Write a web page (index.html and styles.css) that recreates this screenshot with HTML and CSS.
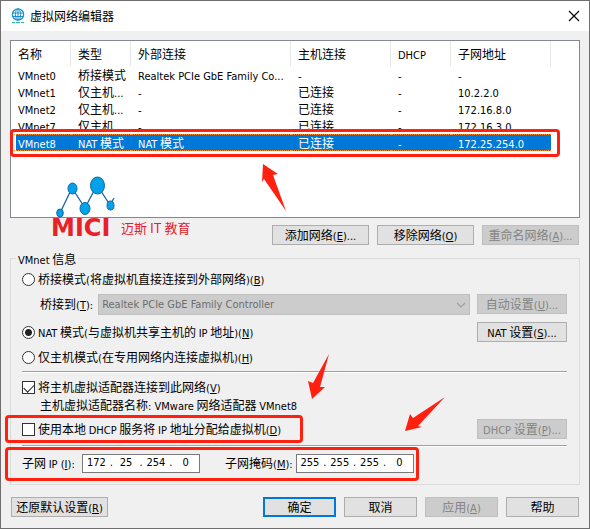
FILE: index.html
```html
<!DOCTYPE html>
<html lang="zh-CN">

<head>
    <meta charset="UTF-8">
    <meta name="viewport" content="width=device-width, initial-scale=1.0">
    <title>虚拟网络编辑器</title>
    <link rel="stylesheet" href="styles.css">
</head>

<body>
    <main class="window">
        <header class="titlebar">
            <svg class="globe" width="14" height="16" viewBox="0 0 14 16" fill="none" stroke="#1a8fc9">
                <circle cx="7" cy="6.5" r="5.6" stroke-width="1.3" />
                <ellipse cx="7" cy="6.5" rx="2.6" ry="5.6" />
                <path d="M7 1v11M1.5 5h11M1.5 8.500h11" />
                <path d="M1 14.5h3M5 14.5h4M10 14.5h3" stroke="#2bb5a0" />
            </svg>
            <h1>虚拟网络编辑器</h1>
            <button type="button" class="close" aria-label="关闭">
                <svg width="12" height="12" viewBox="0 0 12 12" stroke="#000" stroke-width="1.1">
                    <path d="M1 1l10 10M11 1L1 11" />
                </svg>
            </button>
        </header>

        <form class="content">
            <!-- lista de redes -->
            <div class="list">
                <table>
                    <colgroup>
                        <col class="c-name">
                        <col class="c-short">
                        <col class="c-wide">
                        <col class="c-medium">
                        <col class="c-short">
                        <col class="c-medium">
                        <col>
                    </colgroup>
                    <thead>
                        <tr>
                            <th>名称</th>
                            <th>类型</th>
                            <th>外部连接</th>
                            <th>主机连接</th>
                            <th><span class="en">DHCP</span></th>
                            <th>子网地址</th>
                            <td></td>
                        </tr>
                    </thead>
                    <tbody>
                        <tr>
                            <td><span class="en">VMnet0</span></td>
                            <td>桥接模式</td>
                            <td><span class="en">Realtek PCIe GbE Family Co...</span></td>
                            <td><span class="en">-</span></td>
                            <td><span class="en">-</span></td>
                            <td><span class="en">-</span></td>
                            <td></td>
                        </tr>
                        <tr>
                            <td><span class="en">VMnet1</span></td>
                            <td>仅主机<span class="en">...</span></td>
                            <td><span class="en">-</span></td>
                            <td>已连接</td>
                            <td><span class="en">-</span></td>
                            <td><span class="en">10.2.2.0</span></td>
                            <td></td>
                        </tr>
                        <tr>
                            <td><span class="en">VMnet2</span></td>
                            <td>仅主机<span class="en">...</span></td>
                            <td><span class="en">-</span></td>
                            <td>已连接</td>
                            <td><span class="en">-</span></td>
                            <td><span class="en">172.16.8.0</span></td>
                            <td></td>
                        </tr>
                        <tr>
                            <td><span class="en">VMnet7</span></td>
                            <td>仅主机<span class="en">...</span></td>
                            <td><span class="en">-</span></td>
                            <td>已连接</td>
                            <td><span class="en">-</span></td>
                            <td><span class="en">172.16.3.0</span></td>
                            <td></td>
                        </tr>
                        <tr class="selected">
                            <td><span class="en">VMnet8</span></td>
                            <td><span class="en">NAT</span> 模式</td>
                            <td><span class="en">NAT</span> 模式</td>
                            <td>已连接</td>
                            <td><span class="en">-</span></td>
                            <td><span class="en">172.25.254.0</span></td>
                            <td></td>
                        </tr>
                    </tbody>
                </table>
                <div class="mark mark-row"></div>
            </div>

            <div class="buttons">
                <button type="button">添加网络<span class="en">(<u>E</u>)...</span></button>
                <button type="button">移除网络<span class="en">(<u>O</u>)</span></button>
                <button type="button" disabled>重命名网络<span class="en">(<u>A</u>)...</span></button>
            </div>

            <fieldset class="info">
                <legend><span class="en">VMnet</span> 信息</legend>

                <div class="line">
                    <input type="radio" name="mode" id="bridge">
                    <label for="bridge">桥接模式<span class="en">(</span>将虚拟机直接连接到外部网络<span class="en">)(<u>B</u>)</span></label>
                </div>
                <div class="line indent after-mode">
                    <label for="adapter">桥接到<span class="en">(<u>T</u>):</span></label>
                    <div class="combo">
                        <select id="adapter" disabled>
                            <option>Realtek PCIe GbE Family Controller</option>
                        </select>
                        <svg width="10" height="6" viewBox="0 0 10 6" fill="none" stroke="#a0a0a0" stroke-width="1.2">
                            <path d="M1 1l4 4 4-4" />
                        </svg>
                    </div>
                    <button type="button" disabled>自动设置<span class="en">(<u>U</u>)...</span></button>
                </div>
                <div class="line after-button">
                    <input type="radio" name="mode" id="nat" checked>
                    <label for="nat"><span class="en">NAT</span> 模式<span class="en">(</span>与虚拟机共享主机的 <span class="en">IP</span> 地址<span class="en">)(<u>N</u>)</span></label>
                    <button type="button"><span class="en">NAT</span> 设置<span class="en">(<u>S</u>)...</span></button>
                </div>
                <div class="line after-mode">
                    <input type="radio" name="mode" id="host">
                    <label for="host">仅主机模式<span class="en">(</span>在专用网络内连接虚拟机<span class="en">)(<u>H</u>)</span></label>
                </div>
                <hr>
                <div class="line">
                    <input type="checkbox" id="connect" checked>
                    <label for="connect">将主机虚拟适配器连接到此网络<span class="en">(<u>V</u>)</span></label>
                </div>
                <p class="indent">主机虚拟适配器名称<span class="en">: VMware</span> 网络适配器 <span class="en">VMnet8</span></p>
                <div class="line dhcp">
                    <input type="checkbox" id="dhcp">
                    <label for="dhcp">使用本地 <span class="en">DHCP</span> 服务将 <span class="en">IP</span> 地址分配给虚拟机<span class="en">(<u>D</u>)</span></label>
                    <button type="button" disabled><span class="en">DHCP</span> 设置<span class="en">(<u>P</u>)...</span></button>
                    <div class="mark mark-dhcp"></div>
                </div>
                <hr>
                <div class="line subnet">
                    <label for="ip1" class="address">子网 <span class="en">IP (<u>I</u>):</span></label>
                    <div class="ip">
                        <input id="ip1" value="172"><span>.</span>
                        <input aria-label="子网 IP 2" value="25"><span>.</span>
                        <input aria-label="子网 IP 3" value="254"><span>.</span>
                        <input aria-label="子网 IP 4" value="0">
                    </div>
                    <label for="mask1" class="mask">子网掩码<span class="en">(<u>M</u>):</span></label>
                    <div class="ip">
                        <input id="mask1" value="255"><span>.</span>
                        <input aria-label="子网掩码 2" value="255"><span>.</span>
                        <input aria-label="子网掩码 3" value="255"><span>.</span>
                        <input aria-label="子网掩码 4" value="0">
                    </div>
                    <div class="mark mark-subnet"></div>
                </div>
            </fieldset>

            <footer class="footer">
                <button type="button" class="restore">还原默认设置<span class="en">(<u>R</u>)</span></button>
                <button type="button" class="ok">确定</button>
                <button type="button">取消</button>
                <button type="button" disabled>应用<span class="en">(<u>A</u>)</span></button>
                <button type="button">帮助</button>
            </footer>
        </form>

        <!-- logo sobre a lista -->
        <div class="logo">
            <svg width="62" height="44" viewBox="0 0 62 44" fill="#00a2e8" stroke="#1764a5">
                <path d="M5 38L17 13L30 33L42 10L55 30L59 23" fill="none" stroke-width="1.3" />
                <ellipse cx="5" cy="38" rx="3.300" ry="4" />
                <ellipse cx="17.500" cy="13.500" rx="4.500" ry="5.500" />
                <ellipse cx="30" cy="33.500" rx="5" ry="6" />
                <ellipse cx="42.500" cy="10.500" rx="7" ry="8.500" />
                <ellipse cx="55.500" cy="30.500" rx="3.500" ry="4.500" />
            </svg>
            <div class="brand"><b>MICI</b><span>迈斯 IT 教育</span></div>
        </div>

        <!-- setas -->
        <svg class="arrows" width="590" height="529" viewBox="0 0 590 529" fill="#ff2010">
            <path d="M263 164L278 174L273 175L286 211L264 179L262 182Z" />
            <path d="M329 354L320 387L325 387L312 399L308 381L313 383Z" />
            <path d="M445 397L418 426L422 427L405 431L410 414L413 418Z" />
        </svg>
    </main>
</body>

</html>
```

FILE: styles.css
```css
* {
    box-sizing: border-box;
}

body {
    margin: 0;
    background: #f0f0f0;
    color: #000;
    font-family: "Noto Sans CJK SC", sans-serif;
    font-size: 12px;
    line-height: 16px;
}

.en {
    font-family: "DejaVu Sans Condensed", "DejaVu Sans", sans-serif;
    font-size: 11px;
    line-height: 10px;
}

/* janela */
.window {
    position: relative;
    border: 1px solid #6e6e6e;
    min-height: 529px;
}

.titlebar {
    display: flex;
    align-items: center;
    height: 30px;
    padding: 0 9px 0 10px;
    background: #fff;
}

.titlebar h1 {
    flex: 1;
    margin: 0 0 0 5px;
    font-size: 12px;
    font-weight: normal;
}

.titlebar .close {
    display: flex;
    align-items: center;
    border: 0;
    background: none;
}

.content {
    padding: 9px 9px 10px;
}

/* lista */
.list {
    position: relative;
    height: 178px;
    border: 1px solid #828790;
    background: #fff;
}

table {
    width: 100%;
    table-layout: fixed;
    border-spacing: 0;
}

.c-name,
.c-short {
    width: 60px;
}

.c-wide {
    width: 160px;
}

.c-medium {
    width: 100px;
}

th,
td {
    height: 17px;
    padding: 0 0 0 7px;
    line-height: 15px;
    text-align: left;
    font-weight: normal;
    white-space: nowrap;
}

th {
    height: 25px;
    border-right: 1px solid #e5e5e5;
}

.selected {
    color: #fff;
}

.selected td:not(:last-child) {
    border-top: 1px dotted #ff8728;
    border-bottom: 1px dotted #ff8728;
    background: #0078d7;
}

.selected td:first-child {
    background: linear-gradient(to right, #fff 5px, #0078d7 5px);
}

/* botões */
button {
    height: 20px;
    padding: 0;
    border: 1px solid #adadad;
    background: #e1e1e1;
    color: #000;
    font-family: inherit;
    font-size: 12px;
    line-height: 16px;
    white-space: nowrap;
}

button:disabled {
    border-color: #bfbfbf;
    background: #ccc;
    color: #838383;
}

.buttons,
.footer {
    display: flex;
    justify-content: flex-end;
    gap: 8px;
}

.buttons {
    margin: 7px 1px 0 0;
}

.buttons button,
.footer .restore {
    width: 97px;
}

/* informações da rede */
.info {
    margin: 6px 0 0;
    padding: 3px 12px 11px 11px;
    border: 1px solid #dcdcdc;
    min-width: 0;
}

.info legend {
    margin-left: -6px;
    padding: 0 2px;
    line-height: 15px;
}

.line {
    display: flex;
    align-items: center;
    height: 20px;
    white-space: nowrap;
}

.line button {
    width: 90px;
    margin-left: auto;
}

.indent {
    margin: 0 0 0 18px;
}

.after-mode {
    margin-top: 5px;
}

.after-button {
    margin-top: 8px;
}

input[type="radio"],
input[type="checkbox"] {
    flex: none;
    appearance: none;
    width: 13px;
    height: 13px;
    margin: 0 3px 0 0;
    border: 1px solid #333;
    background: #fff;
}

input[type="radio"] {
    border-radius: 50%;
}

input[type="radio"]:checked {
    background: radial-gradient(circle, #222 3px, #fff 4px);
}

input[type="checkbox"]:checked::before {
    content: "";
    display: block;
    width: 9px;
    height: 5px;
    margin: 2px 1px;
    border: solid #222;
    border-width: 0 0 1px 1px;
    transform: rotate(-45deg);
}

.combo {
    position: relative;
    flex: 1;
    margin: 0 7px 0 5px;
}

.combo select {
    appearance: none;
    display: block;
    width: 100%;
    height: 21px;
    padding: 0 3px;
    border: 1px solid #bfbfbf;
    border-radius: 0;
    background: #ccc;
    color: #6d6d6d;
    opacity: 1;
    font-family: "DejaVu Sans Condensed", "DejaVu Sans", sans-serif;
    font-size: 11px;
}

.combo svg {
    position: absolute;
    top: 8px;
    right: 4px;
}

hr {
    height: 2px;
    margin: 4px 0;
    border: 0;
    border-top: 1px solid #a0a0a0;
    border-bottom: 1px solid #fff;
}

.dhcp {
    position: relative;
    margin: 6px 0;
}

.subnet {
    position: relative;
    margin-top: 6px;
}

.ip {
    display: flex;
    align-items: center;
    width: 118px;
    height: 19px;
    margin-left: 3px;
    border: 1px solid #7a7a7a;
    background: #fff;
    font-family: "DejaVu Sans Condensed", "DejaVu Sans", sans-serif;
    font-size: 11px;
}

.ip input {
    flex: 1;
    min-width: 0;
    width: 20px;
    height: 15px;
    padding: 0;
    border: 0;
    background: none;
    font: inherit;
    text-align: center;
}

.address {
    width: 57px;
}

.mask {
    margin-left: 25px;
}

/* rodapé */
.footer {
    margin: 12px 1px 0;
}

.footer button {
    width: 73px;
}

.footer .restore {
    margin-right: auto;
}

.footer .ok {
    border: 2px solid #0078d7;
}

/* destaques em vermelho */
.mark {
    position: absolute;
    border: 3px solid #ff2010;
    border-radius: 4px;
    pointer-events: none;
}

.mark-row {
    top: 88px;
    left: -1px;
    width: 550px;
    height: 28px;
}

.mark-dhcp {
    top: -4px;
    left: -17px;
    width: 298px;
    height: 28px;
}

.mark-subnet {
    top: -6px;
    left: -17px;
    width: 414px;
    height: 34px;
}

.arrows {
    position: absolute;
    top: -1px;
    left: -1px;
    pointer-events: none;
}

.logo {
    position: absolute;
    top: 174px;
    left: 50px;
    color: #e8202a;
}

.logo svg {
    display: block;
    margin-left: 4px;
}

.brand {
    display: flex;
    align-items: center;
    height: 18px;
    white-space: nowrap;
}

.brand b {
    width: 70px;
    font-family: "DejaVu Sans", sans-serif;
    font-size: 24px;
}

.brand span {
    font-size: 13px;
}
```
